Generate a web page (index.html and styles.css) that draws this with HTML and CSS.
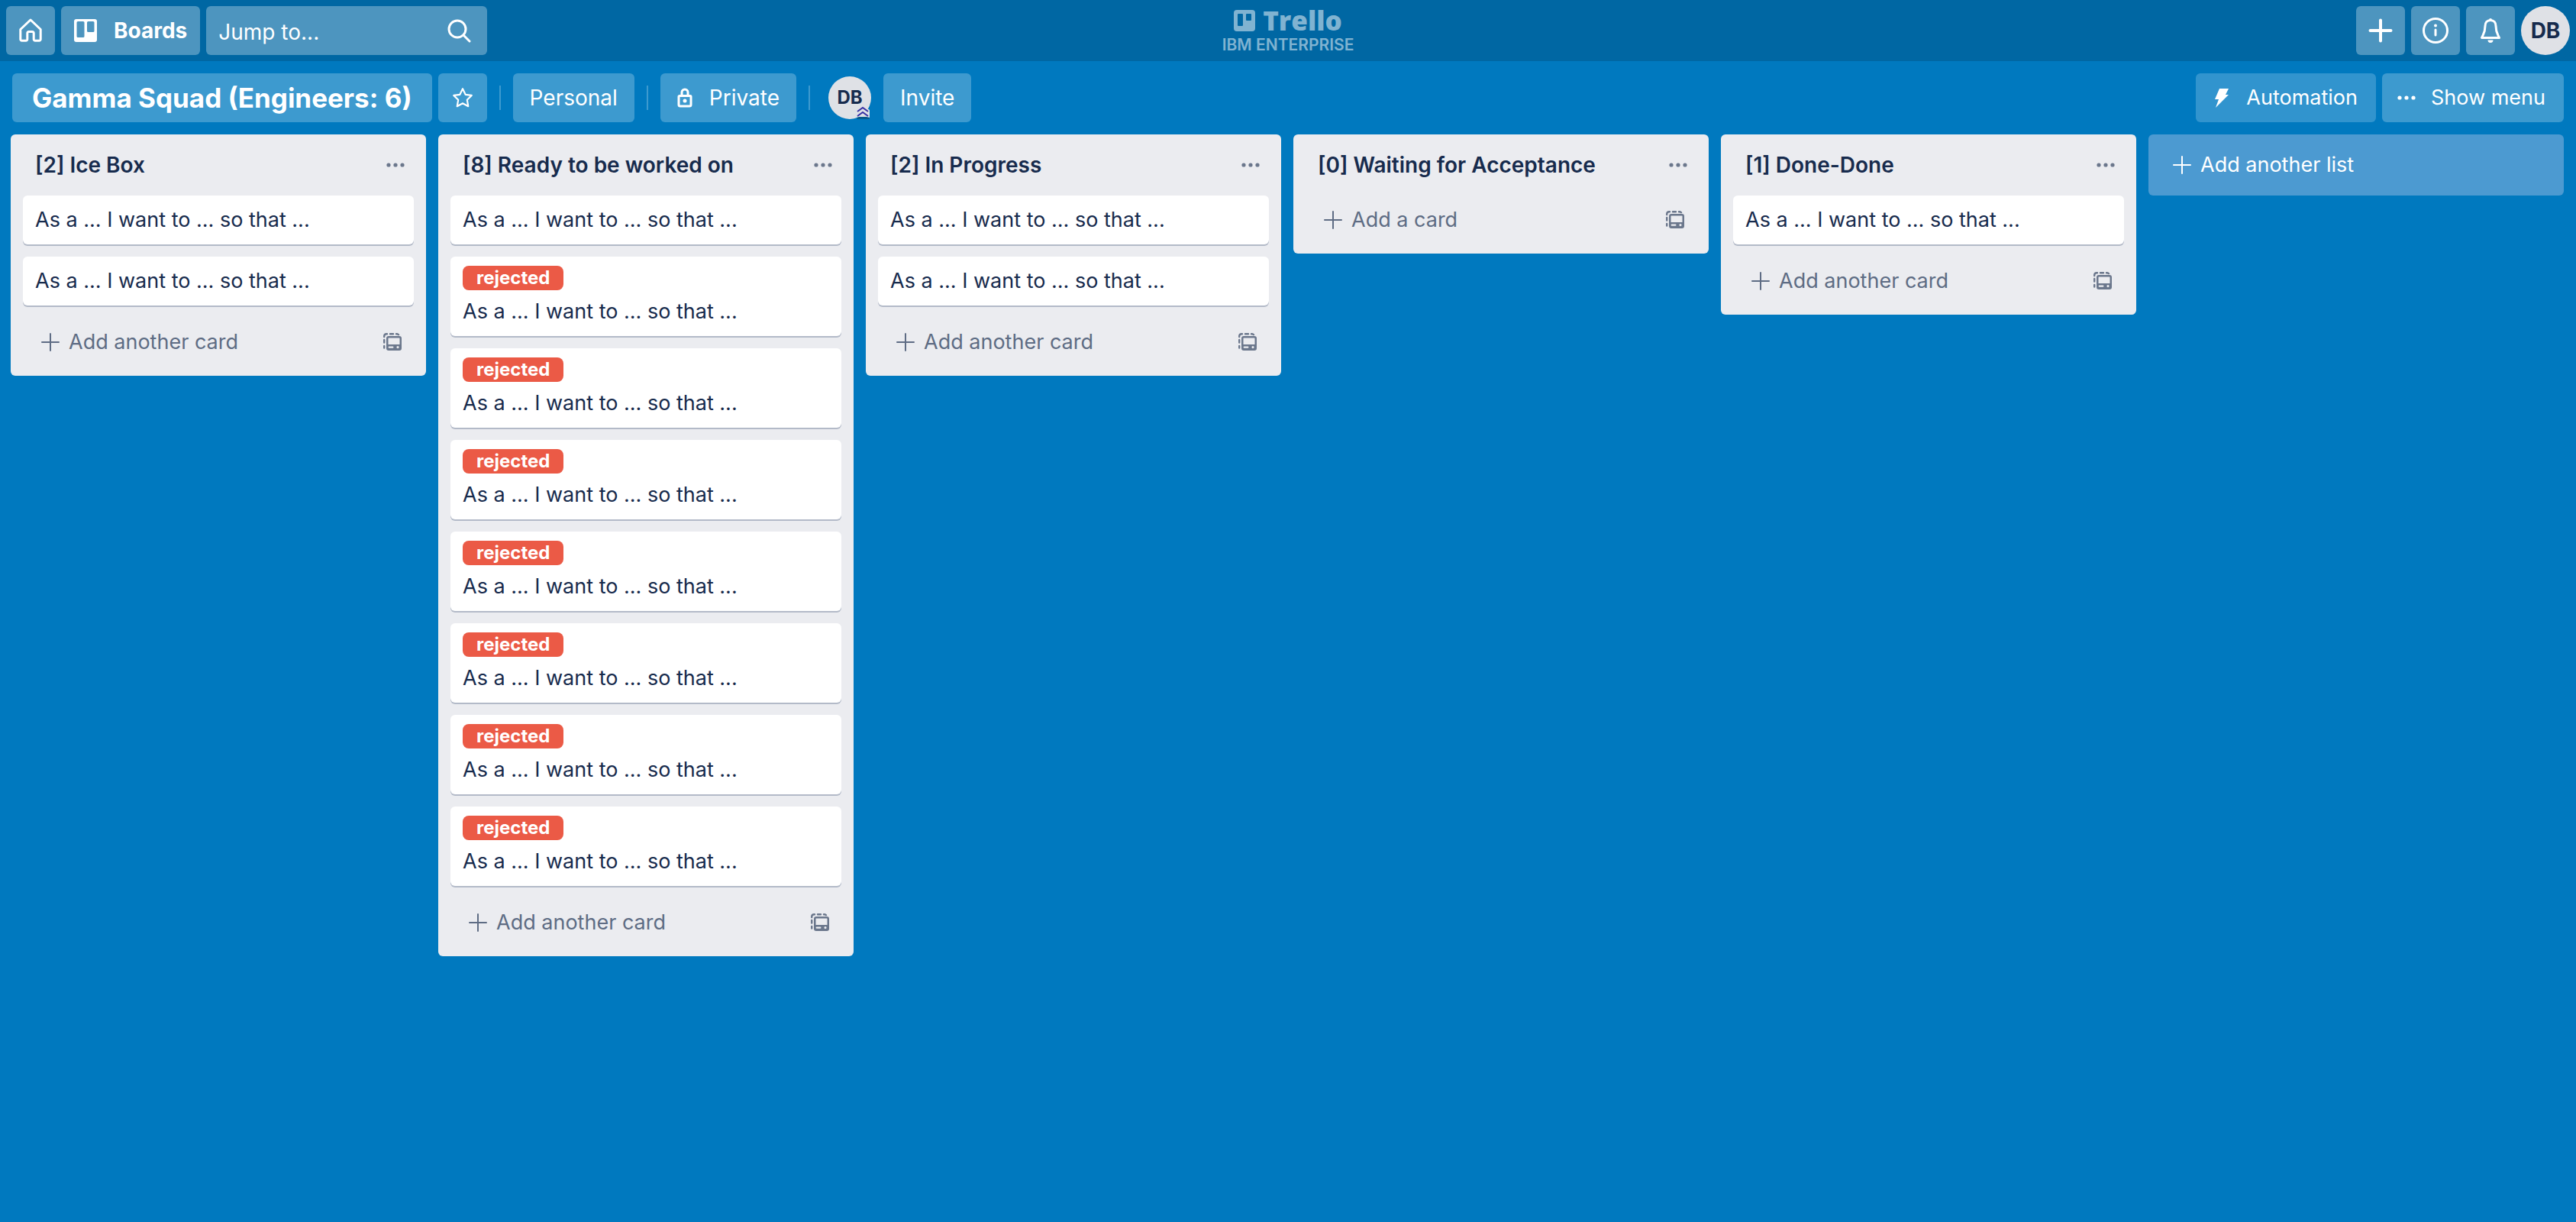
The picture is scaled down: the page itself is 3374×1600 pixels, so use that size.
FILE: index.html
```html
<!DOCTYPE html>
<html lang="en">
<head>
<meta charset="utf-8">
<meta name="viewport" content="width=device-width, initial-scale=1">
<title>Gamma Squad (Engineers: 6) | Trello</title>
<link rel="stylesheet" href="styles.css">
<script src="board.js" defer></script>
</head>
<body>
<svg class="sprite" aria-hidden="true">
  <symbol id="plus" viewBox="0 0 32 32"><path d="M16 2.500v27M2.500 16h27" fill="none" stroke="currentColor" stroke-width="4" stroke-linecap="round"/></symbol>
  <symbol id="plus-thin" viewBox="0 0 24 24"><path d="M12 1v22M1 12h22" fill="none" stroke="currentColor" stroke-width="2" stroke-linecap="round"/></symbol>
  <symbol id="dots" viewBox="0 0 24 24"><circle cx="3" cy="12" r="2.600" fill="currentColor"/><circle cx="12" cy="12" r="2.600" fill="currentColor"/><circle cx="21" cy="12" r="2.600" fill="currentColor"/></symbol>
  <symbol id="template" viewBox="0 0 24 24">
    <path d="M1.200 5V4a3 3 0 0 1 3-2.800h.8M9 1.200h4M17 1.200h1a3 3 0 0 1 2 1M1.200 9v3.500M1.200 17v2.500" fill="none" stroke="currentColor" stroke-width="2.400" stroke-linecap="round"/>
    <path fill-rule="evenodd" fill="currentColor" d="M7 4h14a3 3 0 0 1 3 3v13a3 3 0 0 1-3 3H7a3 3 0 0 1-3-3V7a3 3 0 0 1 3-3zm0 2.600a.5.500 0 0 0-.5.500v8h15V7a.5.500 0 0 0-.5-.5zM7.800 17.400a1.200 1.200 0 0 0 0 2.400h4.500a1.200 1.200 0 0 0 0-2.400zM19 17a1.600 1.600 0 1 0 0 3.200 1.600 1.600 0 0 0 0-3.200z"/>
  </symbol>
</svg>
<header class="topbar">
  <nav class="topbar-group" aria-label="Main">
    <button class="top-button square" aria-label="Home"><svg class="icon-home" viewBox="0 0 32 32"><path d="M16 2 2.800 14.500V27.500a1.800 1.800 0 0 0 1.800 1.800h5.400a1.800 1.800 0 0 0 1.800-1.800V19.500a2 2 0 0 1 2-2h4.400a2 2 0 0 1 2 2v8a1.800 1.800 0 0 0 1.800 1.800h5.400a1.800 1.800 0 0 0 1.800-1.800V14.500z"/></svg></button>
    <button class="top-button boards"><svg class="icon-boards" viewBox="0 0 30 30"><path fill-rule="evenodd" d="M3 0h24a3 3 0 0 1 3 3v24a3 3 0 0 1-3 3H3a3 3 0 0 1-3-3V3a3 3 0 0 1 3-3zm2 3a1.500 1.500 0 0 0-1.500 1.500v18A1.500 1.500 0 0 0 5 24h7a1.500 1.500 0 0 0 1.500-1.500v-18A1.500 1.500 0 0 0 12 3zm13.500 0A1.500 1.500 0 0 0 17 4.500v11a1.500 1.500 0 0 0 1.500 1.500H25a1.500 1.500 0 0 0 1.500-1.500v-11A1.500 1.500 0 0 0 25 3z"/></svg>Boards</button>
    <label class="search"><input type="text" placeholder="Jump to..." aria-label="Jump to"><svg class="icon-search" viewBox="0 0 32 32"><circle cx="13" cy="14" r="11"/><path d="m21 22 8 8"/></svg></label>
  </nav>
  <a class="logo" href="#">
    <span class="logo-name"><svg class="icon-logo" viewBox="0 0 28 28"><path fill-rule="evenodd" d="M4 0h20a4 4 0 0 1 4 4v20a4 4 0 0 1-4 4H4a4 4 0 0 1-4-4V4a4 4 0 0 1 4-4zm2 5a1 1 0 0 0-1 1v14a1 1 0 0 0 1 1h5a1 1 0 0 0 1-1V6a1 1 0 0 0-1-1zm11 0a1 1 0 0 0-1 1v7a1 1 0 0 0 1 1h5a1 1 0 0 0 1-1V6a1 1 0 0 0-1-1z"/></svg>Trello</span>
    <span class="logo-org">IBM ENTERPRISE</span>
  </a>
  <div class="topbar-group end">
    <button class="top-button square" aria-label="Create"><svg class="icon-plus"><use href="#plus"/></svg></button>
    <button class="top-button square" aria-label="Information"><svg class="icon-info" viewBox="0 0 36 36"><circle class="line" cx="18" cy="18" r="15.500"/><circle cx="18" cy="11.500" r="2"/><path class="line" d="M18 17v7"/></svg></button>
    <button class="top-button square" aria-label="Notifications"><svg class="icon-bell" viewBox="0 0 28 34"><path class="line" d="M14 3.500c-4.500 0-7 3-7 7.500 0 8-1.500 9-4.500 15.500h23C22.500 20 21 19 21 11c0-4.500-2.500-7.500-7-7.500z"/><path d="M12 3a2 2 0 0 1 4 0zM10.500 29.500h7a3.500 3.500 0 0 1-7 0z"/></svg></button>
    <button class="avatar large">DB</button>
  </div>
</header>
<div class="boardbar">
  <h1 class="board-name"><button class="bar-button title">Gamma Squad (Engineers: 6)</button></h1>
  <button class="bar-button star" aria-label="Star board"><svg class="icon-star" viewBox="0 0 28 28"><path d="m14 3 3.400 7.100 7.600 1-5.600 5.400 1.400 8L14 20.800l-6.800 3.700 1.400-8L3 11.100l7.600-1z"/></svg></button>
  <span class="divider"></span>
  <button class="bar-button">Personal</button>
  <span class="divider"></span>
  <button class="bar-button private"><svg class="icon-lock" viewBox="0 0 20 26"><path class="line" d="M6 10V6a4 4 0 0 1 8 0v4M3 10.500h14a1 1 0 0 1 1 1V22a2 2 0 0 1-2 2H4a2 2 0 0 1-2-2V11.500a1 1 0 0 1 1-1z"/><circle cx="10" cy="17" r="2.500"/></svg>Private</button>
  <span class="divider"></span>
  <button class="avatar member">DB<svg class="admin-badge" viewBox="0 0 18 18"><path class="back" d="M9 0 18 6v10H0V6z"/><path class="fold" d="m1 16 3-1h10l4 1-1 2H2z"/><path class="chevron" d="m2 8 7-5 7 5M2 14l7-5 7 5"/></svg></button>
  <button class="bar-button">Invite</button>
  <div class="boardbar-end">
    <button class="bar-button automation"><svg class="icon-bolt" viewBox="0 0 20 26"><path d="M7 1h12l-4 8h4L2 26l4-11H1z"/></svg>Automation</button>
    <button class="bar-button menu"><svg class="icon-dots"><use href="#dots"/></svg>Show menu</button>
  </div>
</div>
<main class="lists" id="lists">
  <button class="add-list"><svg class="icon-plus-thin"><use href="#plus-thin"/></svg>Add another list</button>
</main>
</body>
</html>
```
FILE: board.js
```
const STORY = "As a ... I want to ... so that ...";
const lists = [
  { title: "[2] Ice Box", cards: ["", ""] },
  { title: "[8] Ready to be worked on", cards: ["", ...Array(7).fill("rejected")] },
  { title: "[2] In Progress", cards: ["", ""] },
  { title: "[0] Waiting for Acceptance", cards: [] },
  { title: "[1] Done-Done", cards: [""] },
];

const card = (label) =>
  `<a class="card" href="#">${label ? `<span class="label">${label}</span>` : ""}<span class="card-title">${STORY}</span></a>`;

const list = ({ title, cards }) => `
  <section class="list">
    <header class="list-header">
      <h2>${title}</h2>
      <button class="list-menu" aria-label="List actions"><svg class="icon-dots"><use href="#dots"/></svg></button>
    </header>
    ${cards.length ? `<div class="cards">${cards.map(card).join("")}</div>` : ""}
    <footer class="list-footer">
      <button class="add-card"><svg class="icon-plus-thin"><use href="#plus-thin"/></svg>${cards.length ? "Add another card" : "Add a card"}</button>
      <button class="template" aria-label="Create from template"><svg class="icon-template"><use href="#template"/></svg></button>
    </footer>
  </section>`;

document.getElementById("lists").insertAdjacentHTML("afterbegin", lists.map(list).join(""));
```
FILE: styles.css
```css
* { box-sizing: border-box; }
body {
  margin: 0;
  min-height: 100vh;
  background: #0079bf;
  color: #172b4d;
  font: 28px/40px Inter, "Liberation Sans", sans-serif;
}
button, input {
  margin: 0;
  padding: 0;
  border: 0;
  background: none;
  color: inherit;
  font: inherit;
}
button { cursor: pointer; white-space: nowrap; }
h1, h2 { margin: 0; font: inherit; }
a { color: inherit; text-decoration: none; }
svg { display: block; flex: none; fill: currentColor; }
.line, .icon-home, .icon-search, .icon-star {
  fill: none;
  stroke: currentColor;
  stroke-linecap: round;
  stroke-linejoin: round;
}
.sprite { position: absolute; width: 0; height: 0; }

.topbar {
  display: grid;
  grid-template-columns: 1fr auto 1fr;
  align-items: center;
  height: 80px;
  padding: 0 8px;
  background: #0067a3;
  color: #fff;
}
.topbar-group { display: flex; gap: 8px; }
.topbar-group.end { justify-content: flex-end; }
.top-button {
  display: flex;
  align-items: center;
  justify-content: center;
  height: 64px;
  border-radius: 6px;
  background: #4d95bf;
}
.square { width: 64px; }
.boards { gap: 22px; padding: 0 17px; font-weight: 700; }
.search {
  display: flex;
  align-items: center;
  width: 368px;
  height: 64px;
  padding: 4px 20px 0 16px;
  border-radius: 6px;
  background: #4d95bf;
}
.search input { flex: 1; min-width: 0; outline: 0; }
.search input::placeholder { color: #fff; opacity: 1; }
.icon-home { width: 32px; height: 32px; stroke-width: 3px; }
.icon-boards { width: 30px; height: 30px; }
.icon-search { width: 32px; height: 32px; margin-bottom: 4px; stroke-width: 3px; }
.icon-plus { width: 32px; height: 32px; }
.icon-info { width: 36px; height: 36px; }
.icon-info .line { stroke-width: 3px; }
.icon-bell { width: 28px; height: 34px; }
.icon-bell .line { stroke-width: 3px; }

.logo {
  display: flex;
  flex-direction: column;
  align-items: center;
  gap: 2px;
  padding-top: 4px;
  color: #80b3d1;
}
.logo-name { display: flex; align-items: center; gap: 10px; font: 800 35px/32px "Open Sans", sans-serif; }
.logo-org { font-size: 21px; line-height: 28px; font-weight: 600; }
.icon-logo { width: 28px; height: 28px; }

.avatar {
  border-radius: 50%;
  background: #dfe1e6;
  color: #172b4d;
  font-weight: 700;
}
.large { width: 64px; height: 64px; }
.member {
  position: relative;
  width: 56px;
  height: 56px;
  margin: 0 8px;
  font-size: 24px;
}
.admin-badge { position: absolute; right: 2px; bottom: 0; width: 18px; height: 18px; }
.admin-badge .back { fill: #dfe1e6; }
.admin-badge .fold { fill: #055a8c; }
.admin-badge .chevron { fill: none; stroke: #3730a3; stroke-width: 2px; }

.boardbar {
  display: flex;
  align-items: center;
  gap: 8px;
  padding: 16px;
  color: #fff;
}
.bar-button {
  display: flex;
  align-items: center;
  height: 64px;
  padding: 0 22px;
  border-radius: 6px;
  background: #3d9acf;
}
.title { padding: 0 26px; font-size: 35px; font-weight: 700; }
.star { padding: 0 17px; }
.divider { width: 2px; height: 32px; margin: 0 8px; background: #3d9acf; }
.private, .automation { gap: 22px; }
.boardbar-end { display: flex; gap: 8px; margin-left: auto; font-size: 27px; }
.automation { padding: 0 24px; background: #3194ce; }
.menu { gap: 20px; padding: 0 24px 0 20px; }
.icon-star { width: 30px; height: 30px; stroke-width: 2px; }
.icon-lock { width: 20px; height: 26px; }
.icon-lock .line { stroke-width: 3px; }
.icon-bolt { width: 20px; height: 26px; }
.icon-dots { width: 24px; height: 24px; }

.lists {
  display: grid;
  grid-template-columns: repeat(6, minmax(0, 1fr));
  align-items: start;
  gap: 16px;
  padding: 0 16px 16px 14px;
  font-size: 27px;
}
.list, .add-list { border-radius: 6px; }
.list { padding: 0 16px; background: #ebecf0; }
.list-header { display: flex; align-items: center; justify-content: space-between; height: 80px; padding: 0 12px 0 16px; }
.list-header h2 { font-size: 28px; font-weight: 600; }
.list-menu, .template { color: #6b778c; }
.cards { display: flex; flex-direction: column; gap: 16px; padding-bottom: 16px; }
.card {
  display: flex;
  flex-direction: column;
  align-items: flex-start;
  gap: 8px;
  padding: 12px 16px;
  border-radius: 6px;
  background: #fff;
  box-shadow: 0 2px 0 #b3bac8;
}
.label {
  padding: 0 18px;
  border-radius: 8px;
  background: #eb5a46;
  color: #fff;
  font-size: 24px;
  line-height: 32px;
  font-weight: 700;
}
.list-footer {
  display: flex;
  align-items: center;
  justify-content: space-between;
  padding: 12px 16px 24px 24px;
}
.add-card, .add-list { display: flex; align-items: center; gap: 12px; }
.add-card { color: #5e6c84; }
.add-list { height: 80px; padding: 0 32px; background: #4c9ad1; color: #fff; }
.icon-plus-thin { width: 24px; height: 24px; }
.icon-template { width: 24px; height: 24px; }
```
